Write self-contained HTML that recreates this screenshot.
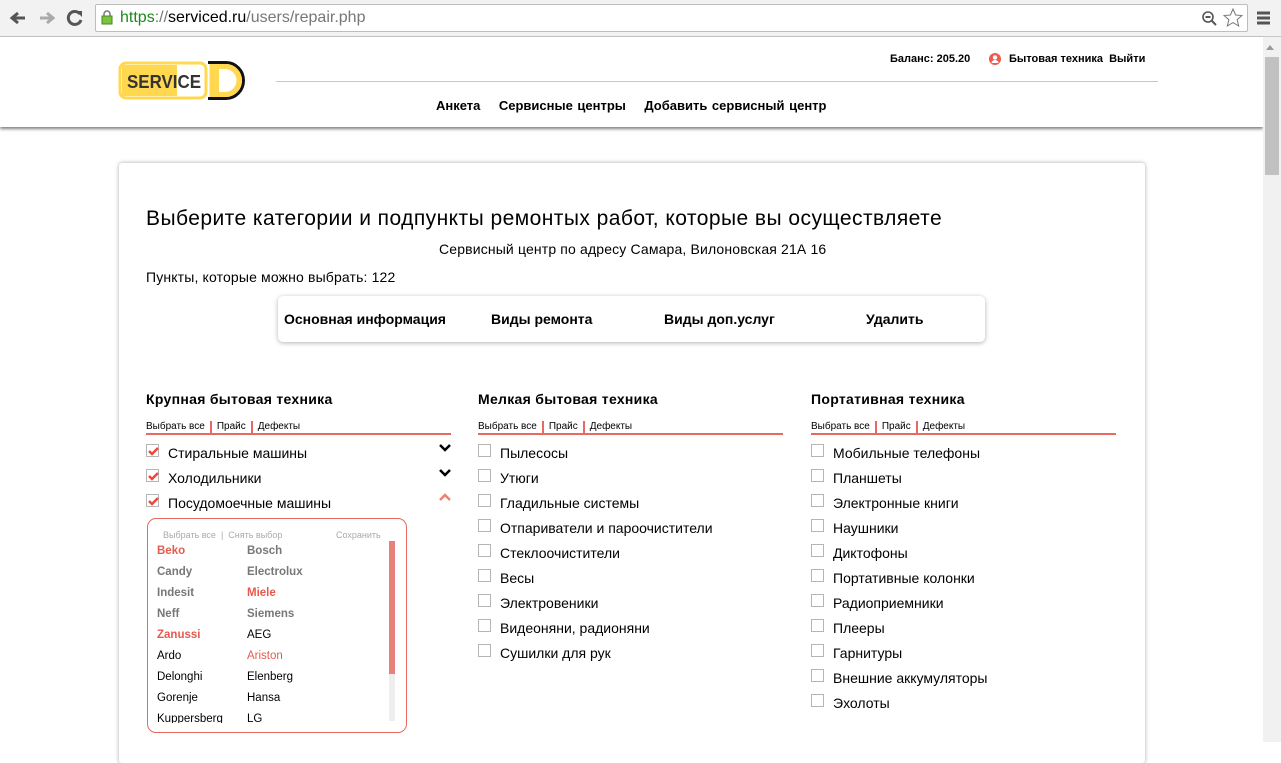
<!DOCTYPE html>
<html><head><meta charset="utf-8"><style>
*{box-sizing:border-box;margin:0;padding:0}
body{width:1281px;height:742px;overflow:hidden;background:#fff;font-family:"Liberation Sans",Arial,sans-serif;position:relative;color:#000}
.abs{position:absolute}
.chrome{left:0;top:0;width:1281px;height:37px;background:#f2f2f2;border-bottom:1px solid #c8c8c8}
.url{left:95px;top:4px;width:1153px;height:28px;background:#fff;border:1px solid #bdbdbd;border-radius:2px;font-size:16px;line-height:26px;padding-left:24px;color:#777}
.hdr{left:0;top:37px;width:1263px;height:90px;background:#fff;box-shadow:0 2px 3px rgba(0,0,0,.5);z-index:2}
.sb{left:1263px;top:37px;width:18px;height:705px;background:#f1f1f1;z-index:3}
.card{left:119px;top:163px;width:1026px;height:600px;background:#fff;box-shadow:0 0 4px rgba(0,0,0,.35);border-radius:3px}
.b{font-weight:bold}
.col{position:absolute;top:391px;width:305px}
.col h3{font-size:14px;font-weight:bold;height:24px;letter-spacing:.3px}
.links{font-size:10px;border-bottom:2px solid #e8695f;height:14px;line-height:12px;margin-top:6px;white-space:nowrap}
.links span{display:inline-block;padding:0 5px;border-left:2px solid #e8695f}
.links span:first-child{padding-left:0;border:none}
.row{height:25px;font-size:14px;line-height:25px;position:relative;padding-left:22px}
.cb{position:absolute;left:0;top:3px;width:13px;height:13px;border:1px solid #b5b5b5;background:#fff}
.cb svg{position:absolute;left:1px;top:1px}
.chev{position:absolute;right:0;top:2px}
.list{left:147px;top:518px;width:260px;height:215px;border:1px solid #e8695f;border-radius:9px;font-size:11.5px}
.list .g{position:absolute;font-size:9px;color:#aaa}
.br{position:absolute;font-size:11.5px}
</style></head><body>
<div class="abs chrome">
<svg class="abs" style="left:9px;top:10px" width="18" height="16"><path d="M16 8H4M9 3L3 8l6 5" stroke="#555" stroke-width="3" fill="none"/></svg>
<svg class="abs" style="left:38px;top:10px" width="18" height="16"><path d="M2 8h12M9 3l6 5-6 5" stroke="#aaa" stroke-width="3" fill="none"/></svg>
<svg class="abs" style="left:66px;top:9px" width="18" height="18"><path d="M14 5A6.5 6.5 0 1 0 15 11" stroke="#555" stroke-width="3" fill="none"/><path d="M10 2h6v6z" fill="#555"/></svg>
<div class="abs url"><svg class="abs" style="left:5px;top:5px" width="12" height="15"><rect x="1" y="6" width="10" height="8" fill="#7cc340" stroke="#4a8a1c"/><path d="M3 6V4a3 3 0 0 1 6 0v2" stroke="#777" stroke-width="1.5" fill="none"/></svg><span style="color:#1a8a1a">https</span>://<span style="color:#000">serviced.ru</span>/users/repair.php
<svg class="abs" style="right:28px;top:5px" width="18" height="18"><circle cx="7" cy="7" r="5" stroke="#555" stroke-width="1.6" fill="none"/><path d="M4.5 7h5M11 11l4 4" stroke="#555" stroke-width="2"/></svg>
<svg class="abs" style="right:4px;top:3px" width="20" height="20"><path d="M10 1l2.6 6 6.4.5-4.9 4.2 1.6 6.3L10 14.6 4.3 18l1.6-6.3L1 7.5 7.4 7z" fill="none" stroke="#777"/></svg></div>
<svg class="abs" style="left:1256px;top:11px" width="16" height="14"><path d="M1 2h13M1 7h13M1 12h13" stroke="#555" stroke-width="3"/></svg>
</div>
<div class="abs hdr">
<svg class="abs" style="left:118px;top:24px" width="132" height="40">
<rect x="2" y="2" width="86" height="35" rx="6" fill="#fff" stroke="#ffd84f" stroke-width="3"/>
<rect x="4" y="4" width="55" height="31" fill="#ffd84f"/>
<text x="9" y="27" font-family="Liberation Sans" font-weight="bold" font-size="18" fill="#333" textLength="74" lengthAdjust="spacingAndGlyphs">SERVICE</text>
<path d="M90 1.5h18a17.5 18 0 0 1 0 36H90" fill="none" stroke="#111" stroke-width="3"/>
<path d="M91.5 3h16.5a16 16.5 0 0 1 0 33H91.5z" fill="#ffd84f"/>
<path d="M101 8h6a11.5 11.5 0 0 1 0 23h-6z" fill="#fff"/>
</svg>
<div class="abs" style="left:276px;top:44px;width:882px;height:1px;background:#c8c8c8"></div>
<div class="abs b" style="left:890px;top:16px;font-size:11px">Баланс: 205.20</div>
<svg class="abs" style="left:989px;top:16px" width="12" height="12"><circle cx="6" cy="6" r="6" fill="#f05a4a"/><circle cx="6" cy="4.5" r="2.2" fill="#fff"/><path d="M2.5 10a3.5 3 0 0 1 7 0z" fill="#fff"/></svg>
<div class="abs b" style="left:1009px;top:16px;font-size:11px">Бытовая техника&nbsp; Выйти</div>
<div class="abs b" style="left:436px;top:61px;font-size:13px;word-spacing:1px">Анкета &nbsp;&nbsp; Сервисные центры &nbsp;&nbsp; Добавить сервисный центр</div>
</div>
<div class="abs sb"><div class="abs" style="left:3px;top:8px;border:4px solid transparent;border-bottom:5px solid #999;border-top:0"></div><div class="abs" style="left:2px;top:20px;width:14px;height:118px;background:#c1c1c1"></div></div>
<div class="abs card"></div>
<div class="abs" style="left:146px;top:207px;font-size:21px;letter-spacing:.45px">Выберите категории и подпункты ремонтых работ, которые вы осуществляете</div>
<div class="abs" style="left:439px;top:241px;font-size:14px;letter-spacing:.15px">Сервисный центр по адресу Самара, Вилоновская 21А 16</div>
<div class="abs" style="left:146px;top:269px;font-size:14px;letter-spacing:.15px">Пункты, которые можно выбрать: 122</div>
<div class="abs" style="left:278px;top:296px;width:707px;height:46px;box-shadow:0 1px 5px rgba(0,0,0,.3);border-radius:5px;background:#fff"></div>
<div class="abs b" style="left:284px;top:311px;font-size:14px">Основная информация</div>
<div class="abs b" style="left:491px;top:311px;font-size:14px">Виды ремонта</div>
<div class="abs b" style="left:664px;top:311px;font-size:14px">Виды доп.услуг</div>
<div class="abs b" style="left:866px;top:311px;font-size:14px">Удалить</div>

<div class="col" style="left:146px"><h3>Крупная бытовая техника</h3><div class="links"><span>Выбрать все</span><span>Прайс</span><span>Дефекты</span></div>
<div style="height:6px"></div>
<div class="row"><div class="cb"><svg width="11" height="11"><path d="M1 5l3 3 6-6" stroke="#f0483a" stroke-width="2.5" fill="none"/></svg></div>Стиральные машины<svg class="chev" width="12" height="10"><path d="M1 2l5 5 5-5" stroke="#000" stroke-width="2.5" fill="none"/></svg></div>
<div class="row"><div class="cb"><svg width="11" height="11"><path d="M1 5l3 3 6-6" stroke="#f0483a" stroke-width="2.5" fill="none"/></svg></div>Холодильники<svg class="chev" width="12" height="10"><path d="M1 2l5 5 5-5" stroke="#000" stroke-width="2.5" fill="none"/></svg></div>
<div class="row"><div class="cb"><svg width="11" height="11"><path d="M1 5l3 3 6-6" stroke="#f0483a" stroke-width="2.5" fill="none"/></svg></div>Посудомоечные машины<svg class="chev" width="12" height="10"><path d="M1 7l5-5 5 5" stroke="#f08070" stroke-width="2.5" fill="none"/></svg></div>
</div>
<div class="col" style="left:478px"><h3>Мелкая бытовая техника</h3><div class="links"><span>Выбрать все</span><span>Прайс</span><span>Дефекты</span></div>
<div style="height:6px"></div>
<div class="row"><div class="cb"></div>Пылесосы</div><div class="row"><div class="cb"></div>Утюги</div><div class="row"><div class="cb"></div>Гладильные системы</div><div class="row"><div class="cb"></div>Отпариватели и пароочистители</div><div class="row"><div class="cb"></div>Стеклоочистители</div><div class="row"><div class="cb"></div>Весы</div><div class="row"><div class="cb"></div>Электровеники</div><div class="row"><div class="cb"></div>Видеоняни, радионяни</div><div class="row"><div class="cb"></div>Сушилки для рук</div>
</div>
<div class="col" style="left:811px"><h3>Портативная техника</h3><div class="links"><span>Выбрать все</span><span>Прайс</span><span>Дефекты</span></div>
<div style="height:6px"></div>
<div class="row"><div class="cb"></div>Мобильные телефоны</div><div class="row"><div class="cb"></div>Планшеты</div><div class="row"><div class="cb"></div>Электронные книги</div><div class="row"><div class="cb"></div>Наушники</div><div class="row"><div class="cb"></div>Диктофоны</div><div class="row"><div class="cb"></div>Портативные колонки</div><div class="row"><div class="cb"></div>Радиоприемники</div><div class="row"><div class="cb"></div>Плееры</div><div class="row"><div class="cb"></div>Гарнитуры</div><div class="row"><div class="cb"></div>Внешние аккумуляторы</div><div class="row"><div class="cb"></div>Эхолоты</div>
</div>

<div class="abs list">
<div class="g" style="left:15px;top:11px">Выбрать все &nbsp;| &nbsp;Снять выбор</div>
<div class="g" style="left:188px;top:11px">Сохранить</div>
<div class="abs" style="left:241px;top:22px;width:6px;height:180px;background:#eee"></div>
<div class="abs" style="left:241px;top:22px;width:6px;height:133px;background:#e8807a"></div>
<div class="abs" style="left:8px;top:24px;width:230px;height:180px;overflow:hidden">
<div class="br b" style="left:1px;top:2px;color:#e8594d">Beko</div><div class="br b" style="left:91px;top:2px;color:#777">Bosch</div>
<div class="br b" style="left:1px;top:23px;color:#777">Candy</div><div class="br b" style="left:91px;top:23px;color:#777">Electrolux</div>
<div class="br b" style="left:1px;top:44px;color:#777">Indesit</div><div class="br b" style="left:91px;top:44px;color:#e8594d">Miele</div>
<div class="br b" style="left:1px;top:65px;color:#777">Neff</div><div class="br b" style="left:91px;top:65px;color:#777">Siemens</div>
<div class="br b" style="left:1px;top:86px;color:#e8594d">Zanussi</div><div class="br" style="left:91px;top:86px">AEG</div>
<div class="br" style="left:1px;top:107px">Ardo</div><div class="br" style="left:91px;top:107px;color:#e8594d">Ariston</div>
<div class="br" style="left:1px;top:128px">Delonghi</div><div class="br" style="left:91px;top:128px">Elenberg</div>
<div class="br" style="left:1px;top:149px">Gorenje</div><div class="br" style="left:91px;top:149px">Hansa</div>
<div class="br" style="left:1px;top:170px">Kuppersberg</div><div class="br" style="left:91px;top:170px">LG</div>
</div></div>
</body></html>
